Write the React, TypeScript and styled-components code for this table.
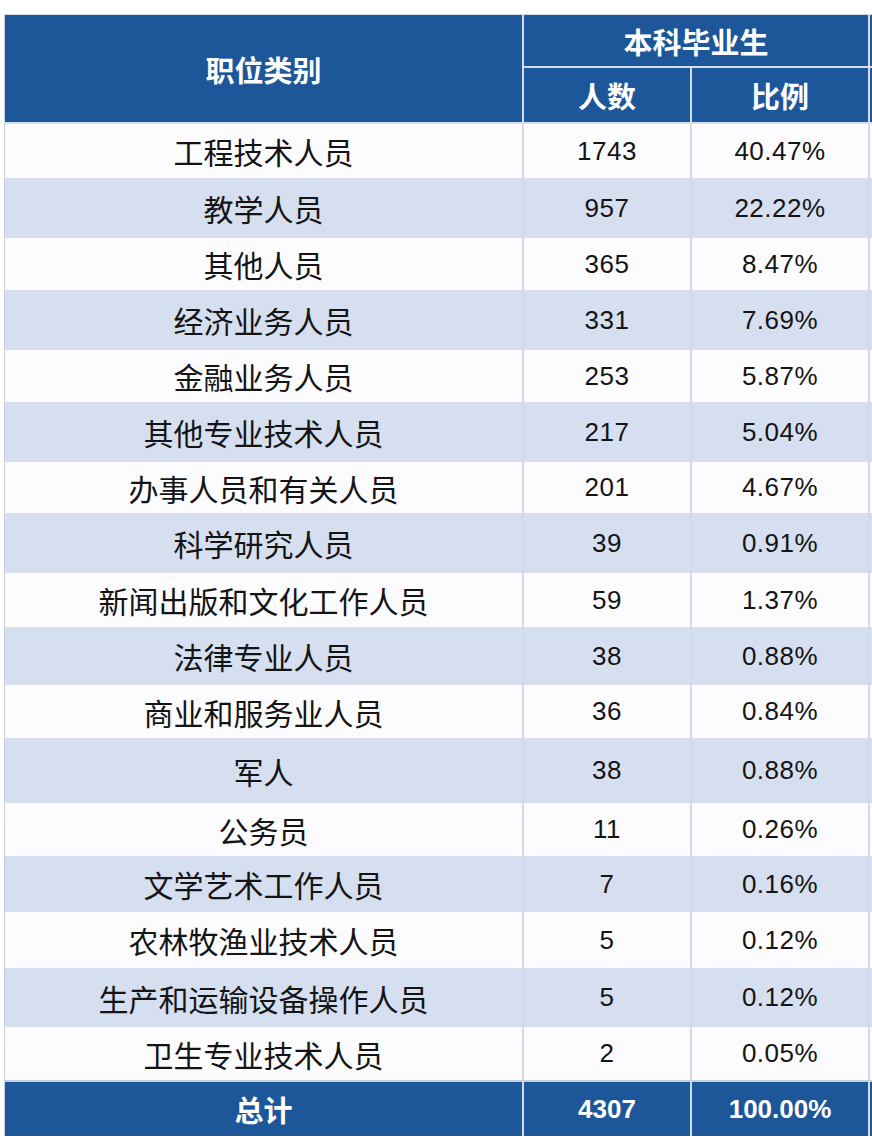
import { createGlobalStyle } from 'styled-components';
import styled from 'styled-components';

const rows = [
    { name: '工程技术人员', count: '1743', ratio: '40.47%', h: 54 },
    { name: '教学人员', count: '957', ratio: '22.22%', h: 60 },
    { name: '其他人员', count: '365', ratio: '8.47%', h: 52 },
    { name: '经济业务人员', count: '331', ratio: '7.69%', h: 60 },
    { name: '金融业务人员', count: '253', ratio: '5.87%', h: 52 },
    { name: '其他专业技术人员', count: '217', ratio: '5.04%', h: 60 },
    { name: '办事人员和有关人员', count: '201', ratio: '4.67%', h: 51 },
    { name: '科学研究人员', count: '39', ratio: '0.91%', h: 60 },
    { name: '新闻出版和文化工作人员', count: '59', ratio: '1.37%', h: 54 },
    { name: '法律专业人员', count: '38', ratio: '0.88%', h: 58 },
    { name: '商业和服务业人员', count: '36', ratio: '0.84%', h: 53 },
    { name: '军人', count: '38', ratio: '0.88%', h: 65 },
    { name: '公务员', count: '11', ratio: '0.26%', h: 53 },
    { name: '文学艺术工作人员', count: '7', ratio: '0.16%', h: 56 },
    { name: '农林牧渔业技术人员', count: '5', ratio: '0.12%', h: 56 },
    { name: '生产和运输设备操作人员', count: '5', ratio: '0.12%', h: 59 },
    { name: '卫生专业技术人员', count: '2', ratio: '0.05%', h: 53 },
];

const GlobalStyle = createGlobalStyle`
    body {
        margin: 0;
        background: #ffffff;
        font-family: "Noto Sans CJK SC", "Noto Sans", sans-serif;
    }
`;

const App = () => {
    return (
        <Page>
            <GlobalStyle />
            <Table>
                <colgroup>
                    <col style={{ width: 519 }} />
                    <col style={{ width: 168 }} />
                    <col style={{ width: 178 }} />
                    <col style={{ width: 200 }} />
                </colgroup>
                <thead>
                    <tr>
                        <HeadCell rowSpan={2} $h={109}>
                            职位类别
                        </HeadCell>
                        <HeadCell colSpan={2} $h={53}>
                            本科毕业生
                        </HeadCell>
                        <HeadCell $h={53} />
                    </tr>
                    <tr>
                        <HeadCell $h={56}>人数</HeadCell>
                        <HeadCell $h={56}>比例</HeadCell>
                        <HeadCell $h={56} />
                    </tr>
                </thead>
                <tbody>
                    {rows.map((r, i) => (
                        <tr key={r.name}>
                            <NameCell $alt={i % 2 === 1} $h={r.h}>
                                {r.name}
                            </NameCell>
                            <NumCell $alt={i % 2 === 1} $h={r.h}>
                                {r.count}
                            </NumCell>
                            <NumCell $alt={i % 2 === 1} $h={r.h}>
                                {r.ratio}
                            </NumCell>
                            <NumCell $alt={i % 2 === 1} $h={r.h} />
                        </tr>
                    ))}
                </tbody>
                <tfoot>
                    <tr>
                        <TotalCell>总计</TotalCell>
                        <TotalCell $num>4307</TotalCell>
                        <TotalCell $num>100.00%</TotalCell>
                        <TotalCell />
                    </tr>
                </tfoot>
            </Table>
        </Page>
    );
};

const Page = styled.div`
    width: 872px;
    height: 1140px;
    overflow: hidden;
    padding: 14px 0 0 4px;
    box-sizing: border-box;
    background: #ffffff;
`;

const Table = styled.table`
    border-collapse: separate;
    border-spacing: 0;
    table-layout: fixed;
    width: 1065px;
    border-left: 1px solid #c6d0e2;
    border-top: 1px solid #d3dbea;
`;

const HeadCell = styled.th<{ $h: number }>`
    height: ${(p) => p.$h}px;
    padding: 0;
    box-sizing: border-box;
    background: #1d5699;
    color: #ffffff;
    font-family: "Noto Sans CJK SC", sans-serif;
    font-weight: 700;
    font-size: 29px;
    text-align: center;
    vertical-align: middle;
    border-right: 2px solid #d3dcec;
    border-bottom: 2px solid #d3dcec;
`;

const NameCell = styled.td<{ $alt: boolean; $h: number }>`
    height: ${(p) => p.$h}px;
    padding: 0;
    box-sizing: border-box;
    background: ${(p) => (p.$alt ? '#d6dff0' : '#fcfcfe')};
    color: #141414;
    font-family: "Noto Sans CJK SC", sans-serif;
    font-size: 30px;
    text-align: center;
    vertical-align: middle;
    border-right: 2px solid #d3dbeb;
`;

const NumCell = styled(NameCell)`
    font-family: "Liberation Sans", "Noto Sans CJK SC", sans-serif;
    font-size: 26px;
    letter-spacing: 0.5px;
`;

const TotalCell = styled.td<{ $num?: boolean }>`
    height: 56px;
    padding: 0;
    box-sizing: border-box;
    background: #1d5699;
    color: #ffffff;
    font-family: ${(p) =>
        p.$num ? '"Liberation Sans", "Noto Sans CJK SC", sans-serif' : '"Noto Sans CJK SC", sans-serif'};
    font-weight: 700;
    font-size: ${(p) => (p.$num ? '26px' : '29px')};
    text-align: center;
    vertical-align: middle;
    border-top: 2px solid #c4d0e6;
    border-right: 2px solid #d3dcec;
`;

export default App;
